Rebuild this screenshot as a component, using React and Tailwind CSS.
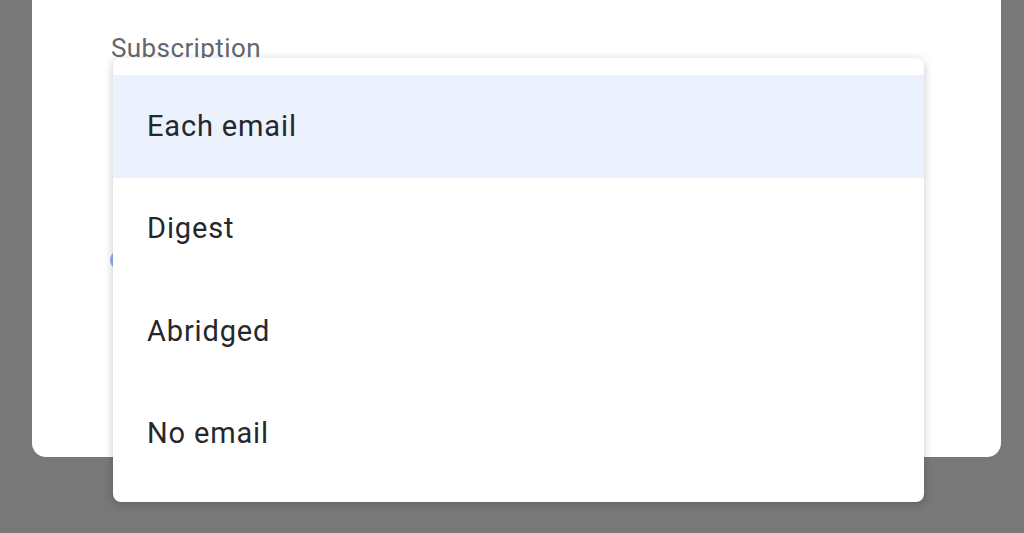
import React from "react";

const items = ["Each email", "Digest", "Abridged", "No email"];

export default function App() {
  return (
    <div
      className="relative h-[533px] w-[1024px] overflow-hidden bg-[#787878]"
      style={{ fontFamily: "Roboto, 'Noto Sans', sans-serif" }}
    >
      <div className="ml-[32px] h-[457px] w-[969px] rounded-b-[14px] bg-white pl-[79px] pt-[35px]">
        <div className="text-[26px] leading-none tracking-[0.4px] text-[#63676c]">Subscription</div>
        <div className="ml-[-1px] mt-[189px] h-[20px] w-[20px] rounded-full bg-[#8fb2ec]" />
      </div>

      <div className="absolute left-[113px] top-[58px] w-[811px] rounded-[8px] bg-white py-[17px] shadow-[0_2px_10px_rgba(0,0,0,0.22)]">
        {items.map((t, i) => (
          <div
            key={t}
            className={
              i === 0
                ? "flex h-[102.5px] items-center bg-[#ebf2fd] pl-[34px] text-[29px] tracking-[0.85px] text-[#25272b]"
                : "flex h-[102.5px] items-center pl-[34px] text-[29px] tracking-[0.85px] text-[#25272b]"
            }
          >
            {t}
          </div>
        ))}
      </div>
    </div>
  );
}
